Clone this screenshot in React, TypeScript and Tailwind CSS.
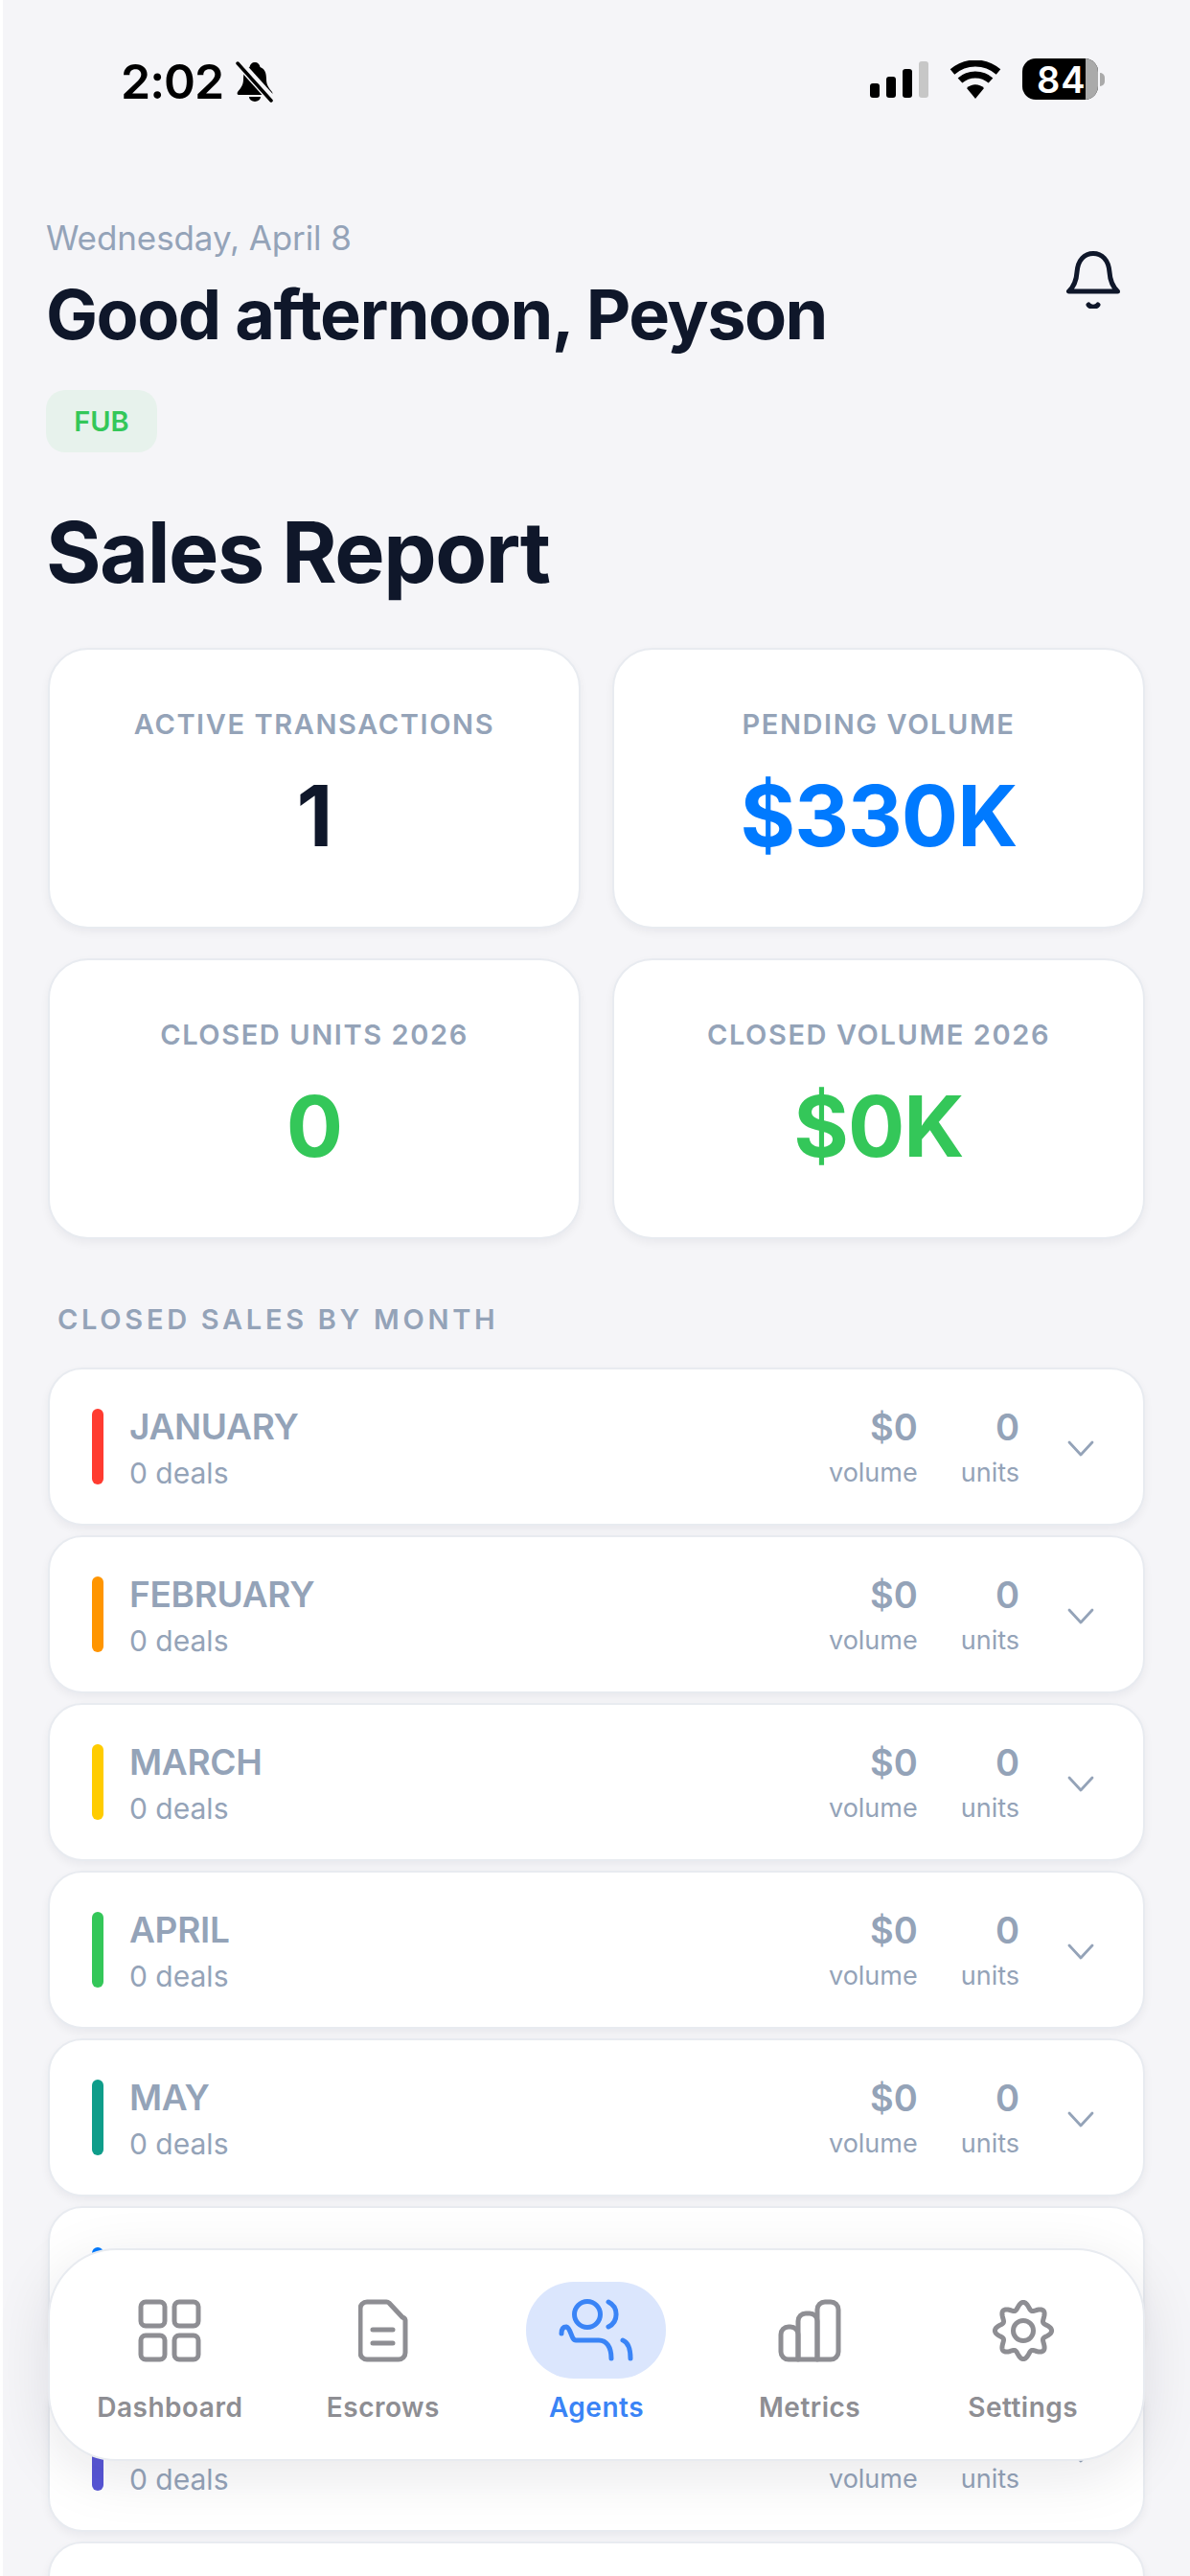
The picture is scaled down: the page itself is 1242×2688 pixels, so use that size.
import { ReactNode } from "react"

const months = [
    { name: "JANUARY", color: "bg-[#ff3b30]" },
    { name: "FEBRUARY", color: "bg-[#ff9500]" },
    { name: "MARCH", color: "bg-[#ffcc00]" },
    { name: "APRIL", color: "bg-[#34c759]" },
    { name: "MAY", color: "bg-[#0f9d8a]" },
    { name: "JUNE", color: "bg-[#007aff]" },
    { name: "JULY", color: "bg-[#5856d6]" },
    { name: "AUGUST", color: "bg-[#af52de]" },
]

const stats = [
    { label: "ACTIVE TRANSACTIONS", value: "1", color: "text-[#0f172a]" },
    { label: "PENDING VOLUME", value: "$330K", color: "text-[#007aff]" },
    { label: "CLOSED UNITS 2026", value: "0", color: "text-[#34c759]" },
    { label: "CLOSED VOLUME 2026", value: "$0K", color: "text-[#34c759]" },
]

// wavy outline for the settings cog, 8 lobes
const gearPath = () => {
    const points: string[] = []
    for (let i = 0; i < 240; i++) {
        const angle = (i / 240) * Math.PI * 2
        const radius = 26 + 3.6 * Math.cos(angle * 8)
        const x = 33 + radius * Math.sin(angle)
        const y = 33 - radius * Math.cos(angle)
        points.push(`${x.toFixed(2)} ${y.toFixed(2)}`)
    }
    return `M${points.join("L")}Z`
}

const StatusBar = () => (
    <div className="flex h-[104px] items-end justify-between pl-[126px] pr-[89px]">
        <div className="mb-[-3px] flex items-center gap-[13px]">
            <span className="text-[50px] leading-[44px] font-semibold tracking-[-1px] text-black">2:02</span>
            <svg width="40" height="44" viewBox="0 0 40 44">
                <path d="M20 2c-3 0-5 2-5.500 5C9 9 8 14 8 20c0 6-3 9-6 13-1 2 0 3 2 3h32c2 0 3-1 2-3-3-4-6-7-6-13 0-6-1-11-6.500-13C25 4 23 2 20 2Z" fill="#000" />
                <path d="M14 38a6 5 0 0 0 12 0Z" fill="#000" />
                <path d="M2 1 38 41" stroke="#f5f5f8" strokeWidth="9" />
                <path d="M2 3 37 42" stroke="#000" strokeWidth="3.500" strokeLinecap="round" />
            </svg>
        </div>
        <div className="flex items-center gap-[22px]">
            <div className="flex items-end gap-[7px]">
                <div className="h-[15px] w-[10px] rounded-[3px] bg-black" />
                <div className="h-[22px] w-[10px] rounded-[3px] bg-black" />
                <div className="h-[30px] w-[10px] rounded-[3px] bg-black" />
                <div className="h-[38px] w-[10px] rounded-[3px] bg-[#c7c7c7]" />
            </div>
            <svg width="54" height="40" viewBox="0 0 54 40">
                <path d="M27 40 18 29c5-5 13-5 18 0Z" fill="#000" />
                <path d="M11 21c9-8 23-8 32 0" fill="none" stroke="#000" strokeWidth="7" />
                <path d="M3 12c14-12 34-12 48 0" fill="none" stroke="#000" strokeWidth="7" />
            </svg>
            <div className="flex items-center gap-[2px]">
                <div className="relative flex h-[43px] w-[79px] items-center overflow-hidden rounded-[14px] bg-black pl-[15px]">
                    <div className="absolute inset-y-0 right-0 w-[13px] bg-[#aaaaaa]" />
                    <span className="relative text-[38px] leading-none font-semibold tracking-[1px] text-white">84</span>
                </div>
                <div className="h-[14px] w-[5px] rounded-r-full bg-[#aaaaaa]" />
            </div>
        </div>
    </div>
)

const StatCard = ({ label, value, color }: { label: string; value: string; color: string }) => (
    <div className="flex h-[293px] flex-col items-center rounded-[42px] border-2 border-[#e8ebf0] bg-white pt-[60px] shadow-[0_4px_10px_rgba(15,23,42,0.05)]">
        <span className="text-[29px] leading-[36px] font-semibold tracking-[1.6px] text-[#94a3b8]">{label}</span>
        <span className={`mt-[23px] text-[88px] leading-[108px] font-bold tracking-[-1px] ${color}`}>{value}</span>
    </div>
)

const MonthRow = ({ name, color }: { name: string; color: string }) => (
    <div className="flex h-[165px] items-center rounded-[36px] border-2 border-[#e8ebf0] bg-white pl-[44px] pr-[50px] shadow-[0_4px_10px_rgba(15,23,42,0.05)]">
        <div className={`h-[79px] w-[12px] rounded-full ${color}`} />
        <div className="ml-[27px] flex flex-1 flex-col pt-[2px]">
            <span className="text-[37px] leading-[46px] font-semibold tracking-[-0.3px] text-[#94a3b8]">{name}</span>
            <span className="mt-[6px] text-[30px] leading-[38px] text-[#94a3b8]">0 deals</span>
        </div>
        <div className="flex flex-col items-end pt-[2px]">
            <span className="text-[38px] leading-[46px] font-semibold text-[#94a3b8]">$0</span>
            <span className="mt-[6px] text-[27px] leading-[38px] text-[#94a3b8]">volume</span>
        </div>
        <div className="ml-[45px] flex flex-col items-end pt-[2px]">
            <span className="text-[38px] leading-[46px] font-semibold text-[#94a3b8]">0</span>
            <span className="mt-[6px] text-[27px] leading-[38px] text-[#94a3b8]">units</span>
        </div>
        <svg className="ml-[49px] mt-[4px] shrink-0" width="30" height="18" viewBox="0 0 30 18">
            <path d="M3 2 15 15 27 2" fill="none" stroke="#94a3b8" strokeWidth="2.800" strokeLinecap="round" strokeLinejoin="round" />
        </svg>
    </div>
)

const NavItem = ({ label, active, children }: { label: string; active?: boolean; children: ReactNode }) => (
    <div className="flex flex-col items-center">
        <div className={`flex h-[101px] w-[146px] items-center justify-center rounded-[50px] ${active ? "bg-[#dbe6fd]" : ""}`}>
            {children}
        </div>
        <span className={`mt-[13px] text-[28px] leading-[34px] font-semibold tracking-[0.5px] ${active ? "text-[#3a84f6]" : "text-[#8e8e93]"}`}>
            {label}
        </span>
    </div>
)

const BottomNav = () => (
    <nav className="absolute left-[50px] top-[2346px] grid h-[222px] w-[1145px] grid-cols-5 rounded-[72px] border-2 border-[#e8ebf0] bg-white px-[14px] pt-[33px] shadow-[0_14px_60px_rgba(15,23,42,0.1)]">
        <NavItem label="Dashboard">
            <svg width="66" height="66" viewBox="0 0 66 66" fill="none" stroke="#8e8e93" strokeWidth="5">
                <rect x="3" y="3" width="25" height="25" rx="5" />
                <rect x="38" y="3" width="25" height="25" rx="5" />
                <rect x="3" y="38" width="25" height="25" rx="5" />
                <rect x="38" y="38" width="25" height="25" rx="5" />
            </svg>
        </NavItem>
        <NavItem label="Escrows">
            <svg width="52" height="66" viewBox="0 0 52 66" fill="none" stroke="#8e8e93" strokeWidth="5" strokeLinecap="round" strokeLinejoin="round">
                <path d="M9 3h20a4 4 0 0 1 3 1l14 15a4 4 0 0 1 3 3v34a7 7 0 0 1-7 7H9a7 7 0 0 1-7-7V10a7 7 0 0 1 7-7Z" />
                <path d="M15 32h21M15 46h21" />
            </svg>
        </NavItem>
        <NavItem label="Agents" active>
            <svg width="78" height="66" viewBox="0 0 78 66" fill="none" stroke="#3a84f6" strokeWidth="5" strokeLinecap="round" strokeLinejoin="round">
                <circle cx="30" cy="16" r="13.500" />
                <path d="M52 3A14.500 14.500 0 0 1 52 29" />
                <path d="M3 36C3 31 5 29 8 29 13 30 13 43 18 43H42C50 43 55 50 55 62" />
                <path d="M67 43C72 45 75 50 75 62" />
            </svg>
        </NavItem>
        <NavItem label="Metrics">
            <svg width="66" height="66" viewBox="0 0 66 66" fill="none" stroke="#8e8e93" strokeWidth="5" strokeLinejoin="round">
                <path d="M21 63H11a8 8 0 0 1-8-8V37a8 8 0 0 1 8-8h2a8 8 0 0 1 8 8Z" />
                <path d="M21 63V23a8 8 0 0 1 8-8h4a8 8 0 0 1 8 8V63Z" />
                <path d="M41 63V11a8 8 0 0 1 8-8h6a8 8 0 0 1 8 8v44a8 8 0 0 1-8 8Z" />
            </svg>
        </NavItem>
        <NavItem label="Settings">
            <svg width="66" height="66" viewBox="0 0 66 66" fill="none" stroke="#8e8e93" strokeWidth="5">
                <path d={gearPath()} />
                <circle cx="33" cy="33" r="10.500" />
            </svg>
        </NavItem>
    </nav>
)

const App = () => {
    return (
        <div className="relative h-[2688px] w-[1242px] overflow-hidden bg-[#f5f5f8] font-['Inter',sans-serif]">
            <div className="absolute inset-y-0 left-0 w-[3px] bg-white" />
            <StatusBar />

            <div className="pl-[50px] pr-[47px]">
                <div className="ml-[-2px] mt-[122px] flex items-start justify-between">
                    <div>
                        <p className="text-[35px] leading-[44px] tracking-[-0.1px] text-[#94a3b8]">Wednesday, April 8</p>
                        <h1 className="mt-[16px] text-[72px] leading-[84px] font-bold tracking-[-1.5px] text-[#0f172a]">Good afternoon, Peyson</h1>
                    </div>
                    <svg className="mr-[26px] mt-[36px]" width="56" height="60" viewBox="0 0 56 60" fill="none" stroke="#0f172a" strokeWidth="5" strokeLinecap="round" strokeLinejoin="round">
                        <path d="M2.500 42H53.500C47 36 45.500 30 45 22 44 9 37 2.500 28 2.500 19 2.500 12 9 11 22 10.500 30 9 36 2.500 42Z" />
                        <path d="M23 56C25 59 31 59 33 56" />
                    </svg>
                </div>

                <div className="ml-[-2px] mt-[37px] flex h-[65px] w-[116px] items-center justify-center rounded-[20px] bg-[#e7f2ec]">
                    <span className="text-[29px] font-semibold text-[#34c759]">FUB</span>
                </div>

                <h2 className="ml-[-2px] mt-[54px] text-[88px] leading-[100px] font-bold tracking-[-1.5px] text-[#0f172a]">Sales Report</h2>

                <div className="mt-[50px] grid grid-cols-2 gap-x-[33px] gap-y-[31px]">
                    {stats.map((stat) => (
                        <StatCard key={stat.label} {...stat} />
                    ))}
                </div>

                <p className="ml-[10px] mt-[66px] text-[29px] leading-[36px] font-semibold tracking-[3.700px] text-[#94a3b8]">CLOSED SALES BY MONTH</p>

                <div className="mt-[32px] flex flex-col gap-[10px]">
                    {months.map((month) => (
                        <MonthRow key={month.name} {...month} />
                    ))}
                </div>
            </div>

            <BottomNav />
        </div>
    )
}

export default App
